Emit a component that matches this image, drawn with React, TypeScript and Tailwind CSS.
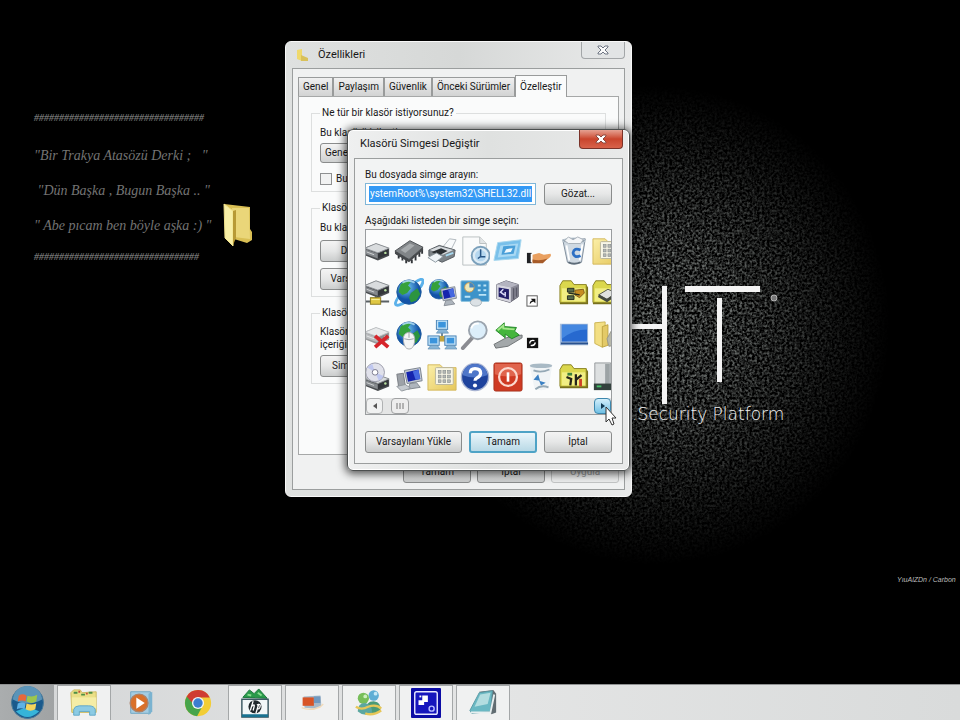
import React, { useState } from 'react';

interface ShellIcon {
  name: string;
  art: React.ReactNode;
}

interface TaskItem {
  name: string;
  open: boolean;
  art: React.ReactNode;
}

const drive = (
  <>
    <path d="M3 13 L16 8 L30 13 L30 21 L18 26 L3 20 Z" fill="#4a4d50" />
    <path d="M4 13 L16 8 L30 13 L18 18 Z" fill="#d9dcde" stroke="#8c9094" />
    <path d="M4 14 L18 19 V24 L4 19 Z" fill="#85898d" />
    <path d="M18 19 L29 14 V20 L18 24 Z" fill="#33363a" />
    <circle cx="26" cy="18" r="1.3" fill="#b8e0a0" />
    <path d="M6 17 L14 20" stroke="#d4d6d8" />
  </>
);

const globe = (
  <>
    <circle cx="16" cy="15" r="13" fill="url(#ocean)" stroke="#1c5a9c" />
    <path d="M7 7 Q12 2 18 4 L15 8 L18 11 L14 16 L9 18 L5 15 Z" fill="#35a13c" />
    <path d="M18 16 L25 11 L28 17 L24 24 L18 26 L16 21 Z" fill="#2c9440" />
    <path d="M9 5 Q16 1 22 5" stroke="#c8f0ff" strokeWidth="2" fill="none" opacity=".7" />
  </>
);

const monitor = (
  <>
    <path d="M11 9 L28 6 L30 20 L14 23 Z" fill="#c3cad3" stroke="#77808c" />
    <path d="M13 11 L26 8 L28 18 L15 21 Z" fill="#1524ad" />
    <path d="M20 10 L26 8 L28 18 L23 19 Z" fill="#4568e0" />
    <path d="M17 23 L24 22 L28 27 L15 29 Z" fill="#aeb5bd" stroke="#7f868e" />
  </>
);

const yellowFolder = (
  <>
    <path d="M1 8 L4 3 H13 L16 7 H29 L31 10 V28 H1 Z" fill="#77701c" />
    <path d="M1 8 L4 3 H13 L16 7 H29 V26 H1 Z" fill="#dbd74d" stroke="#8e8629" />
    <path d="M3 11 H28 V25 H3 Z" fill="#f1ee83" />
  </>
);

const programs = (
  <>
    <path d="M1 3 H14 L17 6 H31 V30 H1 Z" fill="url(#manila)" stroke="#d4b95c" />
    <rect x="9" y="6" width="19" height="18" rx="1" fill="#f8f6e6" stroke="#b8b49c" />
    {[9, 14, 19].map((y) =>
      [12, 17, 22].map((x) => <rect key={`${x}-${y}`} x={x} y={y} width="3" height="3" fill="#b5b8b4" stroke="#82898b" strokeWidth=".6" />)
    )}
  </>
);

const pc = (
  <>
    <rect x="0" y="0" width="12" height="10" fill="#bfe0f6" stroke="#4580b4" />
    <rect x="2" y="2" width="8" height="6" fill="#3b94dc" />
    <path d="M3 10 H10 L13 14 H0 Z" fill="#88b5d6" stroke="#5684a8" strokeWidth=".6" />
  </>
);

const bin = (
  <>
    <path d="M4 4 L28 3 L24 28 Q16 32 9 28 Z" fill="#cfd9e2" stroke="#7d8b99" />
    <ellipse cx="16" cy="5" rx="12" ry="3" fill="#8797a5" stroke="#c9d4dd" />
    <path d="M8 10 L11 26 M25 9 L22 26" stroke="#fff" strokeWidth="2" />
    <path d="M10 28 Q16 31 23 28" stroke="#5d6b78" strokeWidth="2" fill="none" />
  </>
);

const shellIcons: ShellIcon[] = [
  { name: 'Drive', art: drive },
  {
    name: 'Chip',
    art: (
      <>
        <path d="M2 18 L15 26 M5 20 V24 M9 22 V26 M13 24 V29 M19 25 V29 M23 21 V26 M27 17 V22 M30 14 V19" stroke="#33363a" strokeWidth="2" />
        <path d="M1 16 L17 5 L31 12 L16 25 Z" fill="#818588" stroke="#4c5053" />
        <path d="M1 16 L16 25 L31 12 V15 L16 28 L1 19 Z" fill="#45484b" />
        <path d="M7 15 L17 8 L22 10 L12 18 Z" fill="#a7abad" />
      </>
    ),
  },
  {
    name: 'Printer',
    art: (
      <>
        <path d="M15 14 L24 3 L31 4 L25 16 Z" fill="#f8fafb" stroke="#afb6bc" />
        <path d="M2 15 L13 10 L30 15 L29 22 L16 28 L2 21 Z" fill="#7b8287" stroke="#555b60" />
        <path d="M3 15 L13 11 L28 15 L17 20 Z" fill="#d8dcdf" />
        <path d="M5 17 L15 13 L22 16 L12 21 Z" fill="#2b3034" />
        <path d="M1 23 L10 18 L17 22 L9 28 Z" fill="#eef4f8" stroke="#8b969e" />
        <path d="M20 21 L28 18" stroke="#a6d8ef" strokeWidth="2" />
      </>
    ),
  },
  {
    name: 'Recent documents',
    art: (
      <>
        <path d="M3 1 H21 L28 8 V31 H3 Z" fill="#fafbfb" stroke="#b9bebf" />
        <path d="M21 1 V8 H28" fill="#e2e5e6" stroke="#b9bebf" />
        <circle cx="22" cy="21" r="9.5" fill="#dcebf5" stroke="#7ba0bb" strokeWidth="2" />
        <circle cx="22" cy="21" r="6" fill="#b5d7ef" />
        <path d="M22 14 V22 H27 M22 22 L19 24" stroke="#275585" strokeWidth="1.6" fill="none" />
      </>
    ),
  },
  {
    name: 'Run',
    art: (
      <>
        <path d="M5 7 L30 4 L27 24 L1 26 Z" fill="#79c0ea" stroke="#a9d7ee" />
        <path d="M8 10 L27 8 L24 21 L5 23 Z" fill="#a9d9f4" />
        <path d="M11 11 L24 10 L22 19 L9 20 Z" fill="#4a9fd8" />
        <path d="M14 14 L21 13 L19 17 L12 18 Z" fill="#f0f9fe" />
      </>
    ),
  },
  {
    name: 'Shared',
    art: (
      <>
        <rect x="1" y="18" width="5" height="11" fill="#202124" />
        <rect x="5" y="19" width="2" height="9" fill="#fff" />
        <path d="M7 20 L14 18 L19 20 L26 19 Q28 21 24 24 L18 28 H7 Z" fill="#e9a060" />
        <path d="M7 25 Q15 27 23 24 L18 29 H7 Z" fill="#a65b29" />
      </>
    ),
  },
  {
    name: 'Recycle bin (full)',
    art: (
      <>
        {bin}
        <path d="M6 5 L10 1 L15 4 L20 1 L26 4 L23 8 L10 8 Z" fill="#f4f6f8" stroke="#a7b0b9" />
        <path d="M23 15 Q16 12 15 18 Q16 24 23 21" fill="none" stroke="#2c6fc4" strokeWidth="3" />
      </>
    ),
  },
  { name: 'Programs folder', art: programs },

  {
    name: 'Network drive',
    art: (
      <>
        <g transform="translate(0 -5)">{drive}</g>
        <path d="M1 25 H30 M16 19 V25" stroke="#5a6164" strokeWidth="2" />
        <rect x="10" y="21" width="11" height="7" fill="#dfc743" stroke="#8c7b21" />
        <path d="M11 23 H20" stroke="#fbf3a2" />
      </>
    ),
  },
  {
    name: 'Internet',
    art: (
      <>
        <path d="M5 20 Q-2 30 5 29 Q9 28 13 25 M22 5 Q30 -1 31 3 Q31 6 28 10" stroke="#5bb1ea" strokeWidth="3" fill="none" />
        {globe}
      </>
    ),
  },
  {
    name: 'Web computer',
    art: (
      <>
        <g transform="scale(.8)">{globe}</g>
        <g transform="translate(5 4) scale(.88)">{monitor}</g>
      </>
    ),
  },
  {
    name: 'Control panel',
    art: (
      <>
        <rect x="1" y="3" width="30" height="22" rx="1" fill="#3d93c9" stroke="#8fc3de" />
        <circle cx="10" cy="10" r="5" fill="#eee8b8" stroke="#d49a48" />
        <path d="M10 10 L10 5 A5 5 0 0 1 15 10 Z" fill="#4886bd" />
        <path d="M19 8 H22 M25 8 H28 M19 13 H22 M25 13 H28 M5 20 H11 M20 18 H28" stroke="#bce4f6" strokeWidth="2" />
        <ellipse cx="17" cy="26" rx="6" ry="4" fill="#dbe1e5" stroke="#a5b0b7" />
      </>
    ),
  },
  {
    name: 'Screen',
    art: (
      <>
        <path d="M4 7 L14 3 L27 7 V20 L18 26 L4 22 Z" fill="#898996" stroke="#62626f" />
        <path d="M4 7 L14 3 L27 7 L19 10 Z" fill="#b4b4c0" />
        <path d="M4 7 L19 10 V26 L4 22 Z" fill="#d5d5de" />
        <path d="M6 10 L17 12 V23 L6 20 Z" fill="#221e67" />
        <path d="M11 12 L8 15 L12 18 M13 15 V20" stroke="#dcddf7" strokeWidth="1.6" fill="none" />
        <path d="M22 11 V23 M25 10 V20" stroke="#595967" strokeWidth="1.5" />
      </>
    ),
  },
  {
    name: 'Shortcut',
    art: (
      <>
        <rect x="1" y="19" width="11" height="11" fill="#fff" stroke="#555" />
        <path d="M4 28 Q4 24 7 24 L5 22 H10 V27 L8 25 Q6 25 4 28 Z" fill="#111" />
      </>
    ),
  },
  {
    name: 'Network folder',
    art: (
      <>
        {yellowFolder}
        <path d="M9 11 H16 V15 H9 Z M9 19 H16 V23 H9 Z" fill="#566b4c" stroke="#252b1d" />
        <path d="M17 13 L26 12 L27 16 L22 21 L17 18 Z" fill="#c68d22" stroke="#805c17" />
        <path d="M10 16 L22 18" stroke="#252b1d" strokeWidth="1.6" />
      </>
    ),
  },
  {
    name: 'Printers folder',
    art: (
      <>
        {yellowFolder}
        <path d="M7 18 L17 12 L26 16 L16 23 Z" fill="#e0e2de" stroke="#505448" />
        <path d="M7 19 L16 24 L26 17" stroke="#454a40" strokeWidth="3" fill="none" />
      </>
    ),
  },

  {
    name: 'Disconnected drive',
    art: (
      <>
        <g opacity=".55">{drive}</g>
        <path d="M15 17 L29 29 M29 17 L15 29" stroke="#d6252b" strokeWidth="4" />
      </>
    ),
  },
  {
    name: 'Web mouse',
    art: (
      <>
        {globe}
        <path d="M10 22 Q9 14 16 13 Q23 14 22 23 Q21 31 16 31 Q11 31 10 22 Z" fill="#f4f5f5" stroke="#a6abae" />
        <path d="M16 13 V19 M11 20 Q16 22 21 20" stroke="#9aa0a4" fill="none" />
      </>
    ),
  },
  {
    name: 'Workgroup',
    art: (
      <>
        <path d="M16 13 V20 L7 24 M16 20 L25 24" stroke="#6b8493" strokeWidth="2" fill="none" />
        <rect x="12" y="17" width="8" height="6" fill="#c1a442" />
        <g transform="translate(10 0)">{pc}</g>
        <g transform="translate(1 17)">{pc}</g>
        <g transform="translate(19 17)">{pc}</g>
      </>
    ),
  },
  {
    name: 'Search',
    art: (
      <>
        <path d="M14 18 L3 30" stroke="#8b8c92" strokeWidth="4" strokeLinecap="round" />
        <circle cx="19" cy="11" r="9.5" fill="#dceefa" stroke="#9ba4ae" strokeWidth="2" />
        <path d="M12 9 Q14 3 20 4" stroke="#fff" strokeWidth="2" fill="none" />
      </>
    ),
  },
  {
    name: 'Eject drive',
    art: (
      <>
        <path d="M1 26 L14 19 L31 16 V19 L16 28 L3 30 Z" fill="#a3a8aa" stroke="#6e7274" />
        <path d="M3 11 L12 3 V7 L25 8 L23 12 L28 16 L20 20 L13 15 V19 Z" fill="#45b63d" stroke="#218628" />
        <path d="M5 11 L11 6 V9 L23 10" stroke="#a4e68b" strokeWidth="2" fill="none" />
      </>
    ),
  },
  {
    name: 'Offline overlay',
    art: (
      <>
        <rect x="1" y="19" width="12" height="11" fill="#111" />
        <path d="M4 25 Q4 21 9 22 M10 24 Q9 28 5 27" stroke="#fff" strokeWidth="1.4" fill="none" />
      </>
    ),
  },
  {
    name: 'Desktop',
    art: (
      <>
        <rect x="1" y="4" width="30" height="23" fill="#a9bfdc" />
        <rect x="3" y="5" width="27" height="18" fill="#2769cf" />
        <path d="M3 5 H30 V10 Q15 10 3 20 Z" fill="#4487e0" />
        <path d="M2 25 H31" stroke="#28518f" strokeWidth="2" />
      </>
    ),
  },
  {
    name: 'Fonts folder',
    art: (
      <>
        <path d="M3 3 L14 2 V23 L11 29 L3 25 Z" fill="#f3df83" stroke="#cbb352" />
        <path d="M11 7 L17 5 V27 L11 29 Z" fill="#e4ca67" stroke="#bea442" />
        <path d="M16 20 L22 9 L30 26 L18 28 Z" fill="#b7b8aa" stroke="#97988c" />
      </>
    ),
  },

  {
    name: 'Optical drive',
    art: (
      <>
        <g transform="translate(0 5)">{drive}</g>
        <circle cx="15" cy="11" r="10" fill="#e0e1ea" stroke="#9698a6" />
        <path d="M15 11 L7 6 A10 10 0 0 1 12 2 Z M15 11 L24 15 A10 10 0 0 1 19 20 Z" fill="#bfc7ef" />
        <circle cx="15" cy="11" r="3" fill="#fff" stroke="#77788c" />
      </>
    ),
  },
  {
    name: 'My computer',
    art: (
      <>
        <path d="M3 13 L10 12 L12 25 L5 27 Z" fill="#9da2a8" stroke="#767b81" />
        {monitor}
        <path d="M3 26 L12 24 L18 28 L8 31 Z" fill="#c5cacf" stroke="#8f959b" />
      </>
    ),
  },
  { name: 'Program group', art: programs },
  {
    name: 'Help',
    art: (
      <>
        <circle cx="16" cy="16" r="14.5" fill="#1e439d" stroke="#a8b4d2" strokeWidth="1.5" />
        <path d="M3 14 A13 12 0 0 1 29 14 Q16 19 3 14" fill="#4e76c9" />
        <path d="M11 12 Q11 7 16 7 Q22 7 22 12 Q22 15 18 17 Q16 18 16 20" stroke="#fff" strokeWidth="3.5" fill="none" />
        <circle cx="16" cy="25" r="2.2" fill="#fff" />
      </>
    ),
  },
  {
    name: 'Shut down',
    art: (
      <>
        <rect x="1" y="1" width="30" height="30" rx="2" fill="#cf3a23" stroke="#a7331f" />
        <path d="M2 2 H30 V13 Q16 18 2 13 Z" fill="#e0654e" />
        <circle cx="16" cy="16" r="9.5" fill="none" stroke="#fbd9cf" strokeWidth="2.4" />
        <path d="M16 11 V21" stroke="#fff" strokeWidth="2.8" />
      </>
    ),
  },
  {
    name: 'Recycle bin (empty)',
    art: (
      <>
        <path d="M4 4 L28 3 L24 28 Q16 32 9 28 Z" fill="#f0f4f6" />
        <ellipse cx="16" cy="4" rx="12" ry="2.5" fill="#a9bac5" />
        <path d="M10 29 Q16 24 24 27 M8 9 Q16 12 25 8" stroke="#94a8b5" strokeWidth="2" fill="none" />
        <path d="M8 19 L13 13 L15 20 Z M14 20 L21 22 L16 25 Z" fill="#3a80c3" />
      </>
    ),
  },
  {
    name: 'Tools folder',
    art: (
      <>
        {yellowFolder}
        <path d="M8 16 L13 18 L12 25 M18 13 V25 M18 19 L24 14" stroke="#25231a" strokeWidth="2.4" fill="none" />
        <path d="M23 18 V26" stroke="#cf4027" strokeWidth="3" />
        <path d="M9 13 H14" stroke="#3b7e39" strokeWidth="3" />
      </>
    ),
  },
  {
    name: 'Server',
    art: (
      <>
        <path d="M3 1 H20 V29 H3 Z" fill="#dde0e1" stroke="#92989a" />
        <path d="M14 2 H19 V25 H14 Z" fill="#9ca3a5" />
        <rect x="2" y="23" width="24" height="7" fill="#33413d" />
        <path d="M5 26 H10" stroke="#46c069" strokeWidth="2" />
      </>
    ),
  },
];

const taskItems: TaskItem[] = [
  {
    name: 'Windows Gezgini',
    open: true,
    art: (
      <>
        <path d="M2 5 L5 2 H12 L14 5 L29 4 V26 H3 Z" fill="#eadf86" stroke="#cdb960" />
        <path d="M5 5 H9 M13 7 H17 M21 5 H25" stroke="#4c8f45" strokeWidth="2" />
        <path d="M10 4 H12 M18 6 H20" stroke="#c65435" strokeWidth="2" />
        <path d="M3 10 H29 V22 H3 Z" fill="#f5eda6" />
        <path d="M5 29 V23 Q6 19 11 19 H21 Q27 19 28 23 V29 H22 V25 H11 V29 Z" fill="#8ccbe4" stroke="#60a8c8" />
      </>
    ),
  },
  {
    name: 'Windows Media Player',
    open: false,
    art: (
      <>
        <path d="M5 4 H26 V27 H5 Z" fill="#a4cde3" stroke="#6fa6c3" />
        <path d="M24 6 L28 4 V25 L24 29 Z" fill="#7bb3d0" />
        <circle cx="14" cy="16" r="9.5" fill="#d9702a" stroke="#ac826a" strokeWidth="1.5" />
        <path d="M11 10 L20 16 L11 22 Z" fill="#fff" />
      </>
    ),
  },
  {
    name: 'Google Chrome',
    open: false,
    art: (
      <>
        <circle cx="16" cy="16" r="14" fill="#f2cd35" />
        <path d="M4 9 A14 14 0 0 0 15 30 L21 19 L16 16 Z" fill="#47a44b" />
        <path d="M4 9 A14 14 0 0 1 28.5 10 H16 L11 17 Z" fill="#cf3c32" />
        <circle cx="16" cy="16" r="6.5" fill="#f1f4f3" />
        <circle cx="16" cy="16" r="5" fill="#3c7ed0" />
      </>
    ),
  },
  {
    name: 'HP',
    open: true,
    art: (
      <>
        <path d="M3 10 L10 2 L15 6 L20 1 L29 11 Z" fill="#299a4a" stroke="#177439" />
        <path d="M8 7 L12 8 M19 5 L23 8" stroke="#88db8e" strokeWidth="2" />
        <rect x="2" y="12" width="28" height="19" fill="#f2f7f8" stroke="#35535d" strokeWidth="1.5" />
        <rect x="2" y="28" width="28" height="3" fill="#197290" />
        <circle cx="16" cy="20" r="7" fill="#20272b" />
        <path d="M14 14 L11 24 M12 20 Q16 16 15 20 L14 24 M20 17 L17 27 M18 18 Q23 16 21 21 Q20 23 18 22" stroke="#fff" strokeWidth="1.4" fill="none" />
      </>
    ),
  },
  {
    name: 'Ekran Kaydı',
    open: true,
    art: (
      <>
        <path d="M7 9 L25 8 L26 19 L19 22 L8 21 Z" fill="#a7bac9" />
        <path d="M6 10 H18 V19 H6 Z" fill="#d85425" />
        <path d="M18 9 H25 V16 H18 Z" fill="#7199bf" />
        <path d="M5 21 Q14 25 25 20 L28 17" stroke="#f1dab8" strokeWidth="1.5" fill="none" />
      </>
    ),
  },
  {
    name: 'Messenger',
    open: true,
    art: (
      <>
        <circle cx="21" cy="8" r="5.5" fill="#5faed5" />
        <path d="M14 24 Q12 14 21 14 Q30 15 28 25 Q20 31 14 24 Z" fill="#4b9a76" />
        <circle cx="10" cy="11" r="6" fill="#77be5a" />
        <path d="M4 25 Q4 16 12 16 Q20 18 19 27 Q11 31 4 25 Z" fill="#5ba7a0" />
        <path d="M2 20 Q8 24 15 20 Q24 17 29 22 M29 24 Q20 30 12 27" stroke="#e6c657" strokeWidth="2.5" fill="none" />
        <circle cx="23" cy="6" r="2" fill="#c5e9f7" />
        <circle cx="12" cy="9" r="2" fill="#cdeec0" />
      </>
    ),
  },
  {
    name: 'Kamera',
    open: true,
    art: (
      <>
        <rect width="32" height="32" rx="1" fill="#0c0ca5" />
        <rect x="4" y="4" width="24" height="24" rx="2" fill="#1616bd" stroke="#e9eaff" strokeWidth="1.5" />
        <path d="M8 13 H12 V8 H18 V15 H14 V18 H8 Z" fill="#fff" />
        <path d="M9 9 H11" stroke="#fff" strokeWidth="2" />
        <circle cx="22" cy="22" r="2.7" fill="none" stroke="#b6baff" strokeWidth="1.5" />
      </>
    ),
  },
  {
    name: 'Not Defteri',
    open: true,
    art: (
      <>
        <path d="M12 4 L27 2 L30 6 V26 L25 28 Z" fill="#626d72" />
        <path d="M12 5 L26 3 L24 25 L4 27 L2 24 Z" fill="#6ab8c3" stroke="#5a9aa4" />
        <path d="M13 7 L24 5 L21 17 L7 20 Z" fill="#b3dde0" />
        <path d="M3 26 L24 26 L28 7" stroke="#e7eff0" strokeWidth="2" fill="none" />
      </>
    ),
  },
];

const ruleTop = '#'.repeat(34);
const ruleBottom = '#'.repeat(33);

const buttonBase =
  'h-[22px] rounded-[3px] border border-[#8a8c8c] bg-linear-to-b from-[#f4f4f4] via-[#e6e7e7] to-[#cbcdcd] text-center leading-4 text-[#202020]';

function Wallpaper() {
  return (
    <svg className="absolute left-0 top-0 h-[684px] w-[960px]" viewBox="0 0 960 684" aria-hidden="true">
      <defs>
        <radialGradient id="glow">
          <stop offset="0" stopColor="#fff" />
          <stop offset=".35" stopColor="#fff" stopOpacity=".8" />
          <stop offset=".7" stopColor="#fff" stopOpacity=".35" />
          <stop offset="1" stopColor="#fff" stopOpacity="0" />
        </radialGradient>
        <mask id="glowMask">
          <ellipse cx="655" cy="325" rx="235" ry="240" fill="url(#glow)" />
        </mask>
        <filter id="grain" x="0" y="0" width="100%" height="100%" colorInterpolationFilters="sRGB">
          <feTurbulence type="fractalNoise" baseFrequency=".4" numOctaves="2" seed="4" />
          <feColorMatrix values="0 0 0 0 .5  0 0 0 0 .52  0 0 0 0 .51  2.4 0 0 0 -.85" />
        </filter>
        <radialGradient id="ocean" cx=".4" cy=".3">
          <stop offset="0" stopColor="#77ccf4" />
          <stop offset="1" stopColor="#1353a8" />
        </radialGradient>
        <linearGradient id="manila" x2="1" y2="1">
          <stop offset="0" stopColor="#fbefa8" />
          <stop offset="1" stopColor="#e5c75c" />
        </linearGradient>
      </defs>
      <g mask="url(#glowMask)">
        <rect x="420" y="70" width="480" height="510" filter="url(#grain)" />
      </g>
      <g fill="#f4f4f4">
        <rect x="600" y="324" width="64" height="5" />
        <rect x="662" y="286" width="5" height="118" />
        <rect x="685" y="286" width="75" height="6" />
        <rect x="717" y="298" width="5" height="84" />
      </g>
      <circle cx="774" cy="298" r="3" fill="#777" stroke="#b5b5b5" />
    </svg>
  );
}

function CloseGlyph({ stroke, fill }: { stroke: string; fill: string }) {
  return (
    <svg viewBox="0 0 12 10" className="h-[10px] w-3" aria-hidden="true">
      <path d="M1 1 H4 L6 3 L8 1 H11 V2 L8 5 L11 8 V9 H8 L6 7 L4 9 H1 V8 L4 5 L1 2 Z" fill={fill} stroke={stroke} />
    </svg>
  );
}

function PropertiesWindow() {
  const tabs = ['Genel', 'Paylaşım', 'Güvenlik', 'Önceki Sürümler', 'Özelleştir'];
  const [activeTab, setActiveTab] = useState('Özelleştir');

  return (
    <section className="absolute left-[285px] top-[41px] w-[347px] rounded-md border border-[#f8f8f8] bg-linear-to-r from-[#dfe1e0] via-[#d6d8d7] to-[#e9eaea] px-1.5 pb-1.5">
      <header className="flex h-[26px] items-center">
        <svg viewBox="0 0 16 16" className="mx-1 size-4" aria-hidden="true">
          <path d="M1 3 L6 2 V14 L1 12 Z" fill="#efd96c" />
          <path d="M5 8 L12 11 V14 H5 Z" fill="#d9c15a" />
        </svg>
        <h2 className="ml-0.5 flex-1 text-[11px]">Özellikleri</h2>
        <button aria-label="Kapat" className="flex h-[17px] w-11 items-center justify-center self-start rounded-b border border-t-0 border-[#a3a6a8] bg-[#e2e4e5]">
          <CloseGlyph fill="#fafafa" stroke="#6d7482" />
        </button>
      </header>
      <div className="border border-[#9b9e9e] bg-[#f0f1f1] px-[5px] pb-1.5 pt-1.5">
        <div role="tablist" className="flex items-end">
          {tabs.map((tab) => (
            <button
              key={tab}
              role="tab"
              aria-selected={tab === activeTab}
              onClick={() => setActiveTab(tab)}
              className={
                tab === activeTab
                  ? 'relative -mb-px h-[22px] whitespace-nowrap border border-b-0 border-[#999b9b] bg-[#fafbfb] px-1'
                  : 'h-[19px] whitespace-nowrap border border-b-0 border-[#999b9b] bg-linear-to-b from-[#f0f0f0] to-[#d2d3d3] px-1'
              }
            >
              {tab}
            </button>
          ))}
        </div>
        <div className="flex h-[359px] flex-col gap-2 border border-[#a6a8a8] bg-[#fafbfb] px-3 pt-2">
          <fieldset className="border border-[#dddfdf] px-2 pb-1">
            <legend className="px-0.5">Ne tür bir klasör istiyorsunuz?</legend>
            <label htmlFor="kind" className="mt-1 block">Bu klasörü iyileştir:</label>
            <select id="kind" className="mt-0.5 h-5 w-full appearance-none rounded-[3px] border border-[#8a8c8c] bg-linear-to-b from-[#f4f4f4] to-[#cfd1d1] px-1">
              <option>Genel öğeler</option>
            </select>
            <label className="mt-2 flex items-center gap-1">
              <input type="checkbox" className="size-3 appearance-none border border-[#8e9091] bg-[#f1f2f2]" />
              Bu şablonu uygula
            </label>
          </fieldset>
          <fieldset className="flex flex-col items-start border border-[#dddfdf] px-2 pb-1.5">
            <legend className="px-0.5">Klasör resimleri</legend>
            <p className="mb-1 mt-1">Bu klasörde gösterilecek dosya</p>
            <button className={`${buttonBase} w-24`}>Dosya Seç...</button>
            <button className={`${buttonBase} mt-1.5 w-24`}>Varsayılanı Yükle</button>
          </fieldset>
          <fieldset className="border border-[#dddfdf] px-2 pb-1.5">
            <legend className="px-0.5">Klasör simgeleri</legend>
            <p className="mb-1 mt-1 leading-[13px]">
              Klasör simgesini değiştirin;
              <br />
              içeriğin önizlemesi gösterilmez.
            </p>
            <button className={`${buttonBase} w-24`}>Simge Değiştir...</button>
          </fieldset>
        </div>
        <div className="mt-1.5 flex justify-end gap-1.5">
          <button className={`${buttonBase} w-[68px]`}>Tamam</button>
          <button className={`${buttonBase} w-[68px]`}>İptal</button>
          <button disabled className="h-[22px] w-[68px] rounded-[3px] border border-[#c3c5c5] bg-[#eceded] text-[#9a9c9c]">
            Uygula
          </button>
        </div>
      </div>
    </section>
  );
}

function ChangeIconDialog() {
  const [path, setPath] = useState('ystemRoot%\\system32\\SHELL32.dll');

  return (
    <section
      role="dialog"
      aria-label="Klasörü Simgesi Değiştir"
      className="absolute left-[347px] top-[129px] w-[283px] rounded-md border border-[#4c4f4f] bg-linear-to-r from-[#eff0f0] via-[#dfe1e0] to-[#e9eaea] px-1.5 pb-1.5 shadow-[0_1px_8px_2px_rgba(0,0,0,0.65)] ring-1 ring-inset ring-white"
    >
      <header className="flex h-7 items-center">
        <h2 className="ml-1.5 flex-1 text-[11px]">Klasörü Simgesi Değiştir</h2>
        <button
          aria-label="Kapat"
          className="flex h-[19px] w-11 items-center justify-center self-start rounded-b border border-t-0 border-[#7a3228] bg-linear-to-b from-[#e5a192] via-[#c9442c] to-[#d8624a]"
        >
          <CloseGlyph fill="#fff" stroke="#8b4a40" />
        </button>
      </header>
      <div className="border border-[#9b9e9e] bg-[#f2f3f3] px-2.5 pb-2.5 pt-2">
        <label htmlFor="path" className="block">Bu dosyada simge arayın:</label>
        <div className="flex gap-2">
          <div className="flex h-[22px] min-w-0 flex-1 items-center border border-[#7fb6d8] bg-white px-[3px]">
            <input
              id="path"
              value={path}
              onChange={(e) => setPath(e.target.value)}
              className="h-4 w-full min-w-0 bg-[#3399f5] text-center text-white outline-none"
            />
          </div>
          <button className={`${buttonBase} w-[68px]`}>Gözat...</button>
        </div>
        <p className="mt-2">Aşağıdaki listeden bir simge seçin:</p>
        <div className="border border-[#9a9d9f] bg-[#fbfcfc]">
          <ul className="grid grid-cols-[repeat(8,33px)] overflow-hidden">
            {shellIcons.map((icon) => (
              <li key={icon.name} className="-ml-[7px] flex h-[42px] w-[33px] items-center justify-center">
                <svg viewBox="0 0 32 32" className="size-[30px]" role="img" aria-label={icon.name}>
                  {icon.art}
                </svg>
              </li>
            ))}
          </ul>
          <div className="flex h-4 items-center bg-[#e4e5e5]">
            <button aria-label="Sola kaydır" className="flex h-4 w-[17px] items-center justify-center rounded-sm border border-[#b0b2b3] bg-[#f0f1f1]">
              <svg viewBox="0 0 6 6" className="size-1.5"><path d="M5 0 V6 L1 3 Z" fill="#555" /></svg>
            </button>
            <div className="ml-2 flex h-4 w-[18px] items-center justify-center rounded-sm border border-[#a0a2a3] bg-[#ededed]">
              <svg viewBox="0 0 8 6" className="h-1.5 w-2"><path d="M1 0 V6 M4 0 V6 M7 0 V6" stroke="#777" /></svg>
            </div>
            <button aria-label="Sağa kaydır" className="ml-auto flex h-4 w-[17px] items-center justify-center rounded-sm border border-[#3d87ad] bg-linear-to-b from-[#d3effb] to-[#6fc0e4]">
              <svg viewBox="0 0 6 6" className="size-1.5"><path d="M1 0 V6 L5 3 Z" fill="#123a52" /></svg>
            </button>
          </div>
        </div>
        <div className="mt-4 flex gap-[7px]">
          <button className={`${buttonBase} flex-1`}>Varsayılanı Yükle</button>
          <button className="h-[22px] w-[68px] rounded-[3px] border-2 border-[#4ea3c6] bg-linear-to-b from-[#eaf6fb] to-[#b9d9e6] leading-4">
            Tamam
          </button>
          <button className={`${buttonBase} w-[68px]`}>İptal</button>
        </div>
      </div>
    </section>
  );
}

function Taskbar() {
  return (
    <nav className="flex h-9 gap-[3px] border-t border-[#8f9192] bg-linear-to-r from-[#d4d6d7] via-[#e4e5e5] to-[#d9dbdb]">
      <button aria-label="Başlat" className="flex w-[54px] items-center justify-center bg-linear-to-r from-[#aaadae] to-[#a0a3a4]">
        <svg viewBox="0 0 36 36" className="size-[35px]" aria-hidden="true">
          <circle cx="18" cy="18" r="16.5" fill="#1b5a8c" stroke="#4a7b99" />
          <path d="M3 15 A15 14 0 0 1 33 15 Q18 23 3 15" fill="#5b94b8" />
          <path d="M6 27 Q18 21 30 27 Q18 39 6 27" fill="#36b4d9" />
          <path d="M9 11 Q13 8 17 11 L16 17 Q12 15 8 17 Z" fill="#e8683a" />
          <path d="M18 11 Q23 13 28 10 L27 17 Q22 20 17 17 Z" fill="#9cc64c" />
          <path d="M8 19 Q12 17 16 19 L15 25 Q11 23 7 25 Z" fill="#5eb2e6" />
          <path d="M17 19 Q22 21 27 19 L26 25 Q21 28 16 25 Z" fill="#f5d45c" />
        </svg>
      </button>
      {taskItems.map((item) => (
        <button
          key={item.name}
          aria-label={item.name}
          className={
            item.open
              ? 'flex w-[54px] items-center justify-center border border-b-0 border-[#a4a7a8] bg-[#f0f1f1]'
              : 'flex w-[54px] items-center justify-center'
          }
        >
          <svg viewBox="0 0 32 32" className="size-[30px]" aria-hidden="true">
            {item.art}
          </svg>
        </button>
      ))}
    </nav>
  );
}

export default function App() {
  return (
    <div className="flex min-h-screen flex-col overflow-hidden bg-black font-['Roboto',sans-serif] text-[10px] leading-4 text-[#181818]">
      <main className="relative flex-1 overflow-hidden">
        <Wallpaper />

        {/* Saying written on the wallpaper */}
        <div className="absolute left-[34px] top-[108px] font-['Liberation_Serif',serif] text-sm italic leading-5 text-[#737373]">
          <p className="text-[10px] font-bold">{ruleTop}</p>
          <p className="mt-[18px] whitespace-pre">"Bir Trakya Atasözü Derki ;   "</p>
          <p className="mt-[15px] whitespace-pre"> "Dün Başka , Bugun Başka .. "</p>
          <p className="mt-[15px] whitespace-pre">" Abe pıcam ben böyle aşka :) "</p>
          <p className="mt-[11px] text-[10px] font-bold">{ruleBottom}</p>
        </div>
        <p className="absolute left-[632px] top-[402px] font-['DejaVu_Sans_Light','DejaVu_Sans',sans-serif] text-[17px] font-extralight leading-6 text-[#efefef]">
          .Security Platform
        </p>
        <p className="absolute left-[897px] top-[572px] whitespace-nowrap font-['Liberation_Sans',sans-serif] text-[7px] italic text-[#bbb]">
          YıuAlZDn / Carbon
        </p>

        {/* Desktop folder */}
        <svg viewBox="0 0 30 46" className="absolute left-[223px] top-[202px] h-[46px] w-[30px]" role="img" aria-label="Klasör">
          <path d="M1 2 L27 5 V27 L29 30 V38 L24 41 L11 37 Z" fill="#d9bf54" />
          <path d="M9 6 L26 6 L27 37 L11 35 Z" fill="#ead679" />
          <path d="M1 2 L10 9 V44 L2 36 Z" fill="#f8efa6" stroke="#efe08a" />
          <path d="M10 9 L13 8 V36 L10 43 Z" fill="#b89a35" />
        </svg>

        <PropertiesWindow />
        <ChangeIconDialog />

        {/* Mouse pointer */}
        <svg viewBox="0 0 12 20" className="absolute left-[605px] top-[406px] h-5 w-3" aria-hidden="true">
          <path d="M1 1 V16 L4 13 L7 19 L9 18 L7 12 H11 Z" fill="#fff" stroke="#333" />
        </svg>
      </main>
      <Taskbar />
    </div>
  );
}
